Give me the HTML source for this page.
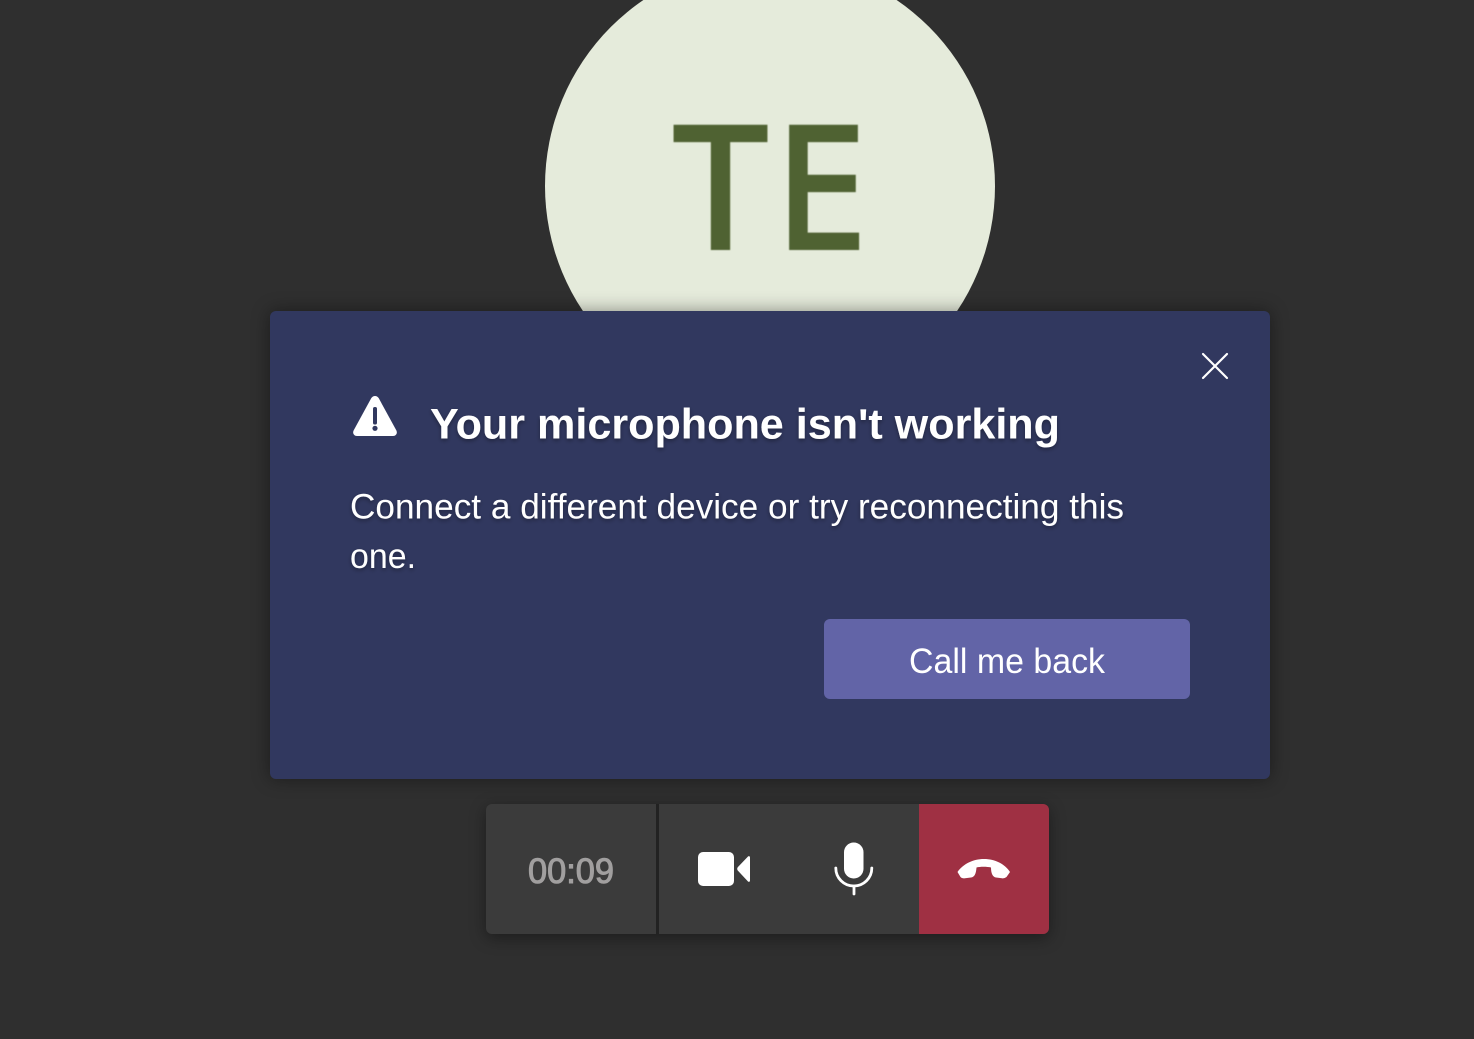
<!DOCTYPE html>
<html lang="en"><head><meta charset="utf-8"><title>Call</title>
<style>
html,body{margin:0;padding:0;width:1474px;height:1039px;overflow:hidden;background:#2f2f2f}
svg{position:absolute;left:0;top:0;display:block}
text{font-family:"Liberation Sans",sans-serif}
.box{position:absolute}
</style></head><body>
<div class="box" style="left:545px;top:-39px;width:450px;height:450px;border-radius:50%;background:#e5ebdb"></div>
<svg width="1474" height="1039" viewBox="0 0 1474 1039" style="z-index:1">
<defs><filter id="w" x="-10%" y="-10%" width="120%" height="120%"><feMorphology operator="dilate" radius="1 0"/><feGaussianBlur stdDeviation=".5"/></filter></defs>
<g filter="url(#w)" fill="#4f6233" stroke="#4f6233" stroke-width="3.5" style="font-size:167px">
<text x="676.500" y="248.300" style="font-family:'DejaVu Sans',sans-serif" textLength="88" lengthAdjust="spacingAndGlyphs">T</text>
<text x="778" y="248.300" style="font-family:'DejaVu Sans',sans-serif" textLength="87.500" lengthAdjust="spacingAndGlyphs">E</text>
</g>
</svg>
<div class="box" style="z-index:2;left:270px;top:311px;width:1000px;height:468px;border-radius:6px;background:#31385f;box-shadow:0 0 18px rgba(0,0,0,.42)"></div>
<div class="box" style="z-index:2;left:824px;top:619px;width:366px;height:80px;border-radius:6px;background:#6264a7"></div>
<div class="box" style="z-index:2;left:486px;top:804px;width:563px;height:130px;border-radius:6px;background:#3b3b3b;box-shadow:0 4px 16px rgba(0,0,0,.4);overflow:hidden">
  <div class="box" style="left:170px;top:0;width:3px;height:130px;background:#222"></div>
  <div class="box" style="left:433px;top:0;width:130px;height:130px;background:#9f3043"></div>
</div>
<svg width="1474" height="1039" viewBox="0 0 1474 1039" style="z-index:3">
<defs><filter id="s" x="-5%" y="-30%" width="110%" height="170%"><feDropShadow dx="0" dy="2" stdDeviation="2" flood-color="#000" flood-opacity=".35"/></filter></defs>
<!-- warning -->
<path d="M375 396c1.600 0 3 .9 3.800 2.300l17.600 32.200c1.300 2.800-.4 5.500-3.300 5.500h-36.200c-2.900 0-4.600-2.700-3.300-5.500l17.600-32.200c.8-1.400 2.200-2.300 3.800-2.300z" fill="#fff"/>
<rect x="373" y="407" width="4" height="17.500" rx="1.800" fill="#31385f"/>
<circle cx="375" cy="428.300" r="2.600" fill="#31385f"/>
<!-- close -->
<path d="M1203 354l24 24M1227 354l-24 24" stroke="#fff" stroke-width="2.200" stroke-linecap="round" fill="none"/>
<g filter="url(#s)" fill="#fff">
<text x="430" y="438.500" font-size="43" font-weight="700" textLength="630" lengthAdjust="spacingAndGlyphs">Your microphone isn't working</text>
<text x="350" y="518.500" font-size="35.500" textLength="774" lengthAdjust="spacingAndGlyphs">Connect a different device or try reconnecting this</text>
<text x="350" y="568" font-size="35.500" textLength="66" lengthAdjust="spacingAndGlyphs">one.</text>
</g>
<text x="909" y="673" font-size="35.500" fill="#fff" textLength="196" lengthAdjust="spacingAndGlyphs">Call me back</text>
<text x="528" y="883" font-size="35" fill="#a19f9f" stroke="#a19f9f" stroke-width="1" textLength="86" lengthAdjust="spacingAndGlyphs">00:09</text>
<!-- video -->
<rect x="698" y="852" width="36" height="34" rx="5" fill="#fff"/>
<path d="M750 857.500v23c0 1.200-1 1.700-2 1l-9.800-10.500c-1.300-1.200-1.300-3 0-4.200l9.800-10.300c1-.7 2-.2 2 1z" fill="#fff"/>
<!-- mic -->
<rect x="844" y="842.500" width="19.500" height="36" rx="9.750" fill="#fff"/>
<path d="M835.800 868c0 10 8 18 18 18s18-8 18-18" stroke="#fff" stroke-width="2.800" stroke-linecap="round" fill="none"/>
<path d="M854 886v8" stroke="#fff" stroke-width="2.800" stroke-linecap="round" fill="none"/>
<!-- hang up -->
<path d="M957.500 872C963 864 973 859 984 859C995 859 1005 864 1010 872L1006.500 877Q1004 878.800 1002 878.300L996 877.500C993 877 991 874 991 867.500C987 866.500 980 866.500 976.500 867.500C976 874 974.500 877 971 877.500L965 878.300Q962 878.600 960.500 877Z" fill="#fff"/>
</svg>
</body></html>
